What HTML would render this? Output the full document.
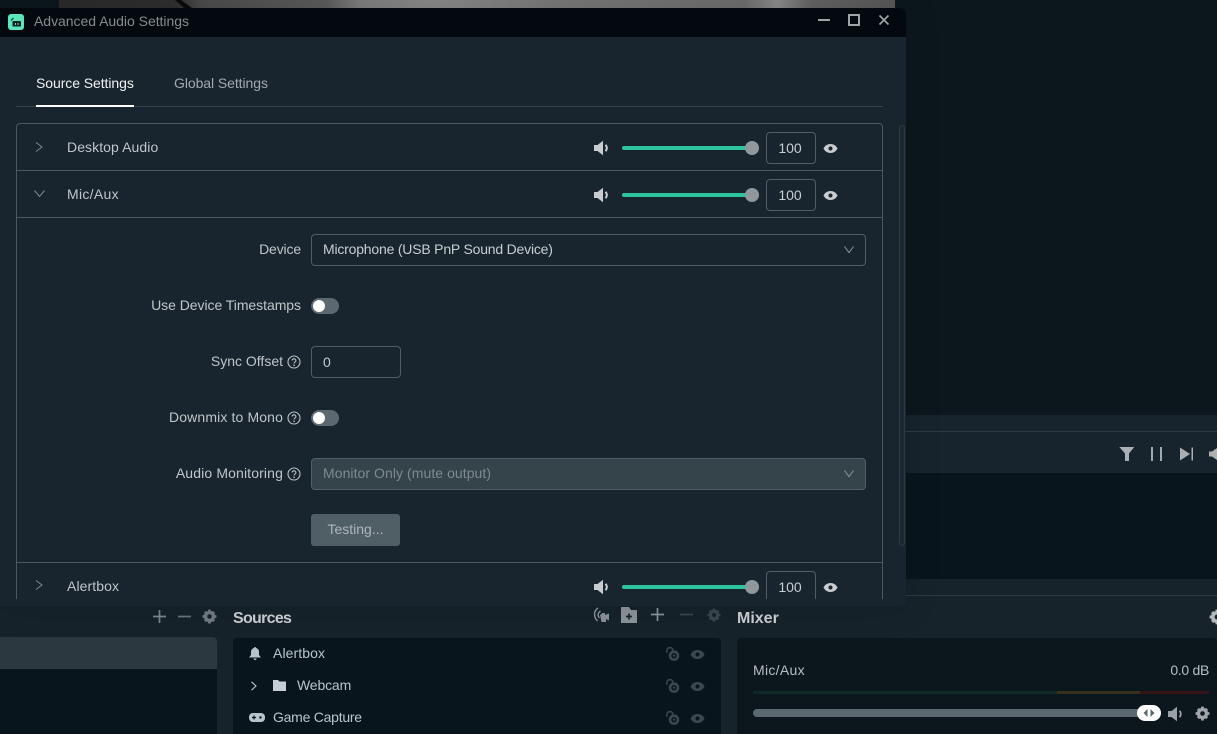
<!DOCTYPE html>
<html><head><meta charset="utf-8"><style>
*{box-sizing:border-box}
html,body{margin:0;padding:0}
body{width:1217px;height:734px;position:relative;overflow:hidden;background:#0c171d;font-family:"Liberation Sans",sans-serif;font-size:14px;color:#c0c5c8}
.a{position:absolute}
.t{position:absolute;white-space:nowrap;line-height:18px}
.r{text-align:right}
svg{position:absolute;overflow:visible}
.inp{position:absolute;border:1px solid #4f5e68;border-radius:4px;line-height:28px;white-space:nowrap;color:#c8cdd0}
.num{line-height:30px;text-align:center;padding-right:2px}
.line{position:absolute;background:#4a5860;height:1px}
.track{position:absolute;left:622px;width:130px;height:4px;background:#2ec4a0;border-radius:2px}
.knob{position:absolute;left:745px;width:14px;height:14px;background:#91989d;border-radius:50%}
.sw{position:absolute;left:311px;width:28px;height:16px;background:#5b6870;border-radius:8px}
.sw i{position:absolute;left:2px;top:2px;width:12px;height:12px;background:#fff;border-radius:50%}
.dk{--h:#09151c;color:#3c4850}
</style></head><body>
<svg width="0" height="0" style="position:absolute"><defs>
<symbol id="spk" viewBox="0 0 16 16"><path d="M1 5h3.500L10 .8v14.400L4.500 11H1z" fill="#c8ccce"/><path d="M12.500 4.800c1.700 2 1.700 4.400 0 6.400" stroke="#c8ccce" stroke-width="2" fill="none"/></symbol>
<symbol id="eye" viewBox="0 0 16 16"><path d="M.5 8C2.300 4.600 5 3.200 8 3.200s5.700 1.400 7.500 4.800C13.700 11.400 11 12.800 8 12.800S2.300 11.400.5 8z" fill="currentColor"/><circle cx="8" cy="8" r="2.100" fill="var(--h,#17242d)"/></symbol>
<symbol id="gear" viewBox="0 0 16 16"><circle cx="8" cy="8" r="4.200" fill="none" stroke="currentColor" stroke-width="3.600"/><path d="M6.500 .6h3v3h-3zM6.500 12.400h3v3h-3zM.6 6.500h3v3h-3zM12.400 6.500h3v3h-3zM2 4.200L4.200 2l2 2L4 6.200zM9.800 4L11.800 2 14 4.200l-2 2zM2 11.800l2-2 2.200 2.200L4.200 14zM9.800 12l2.200-2.200 2 2L11.800 14z" fill="currentColor"/></symbol>
<symbol id="lock" viewBox="0 0 16 16"><circle cx="9" cy="9.700" r="4" fill="none" stroke="currentColor" stroke-width="2.600"/><circle cx="9" cy="9.700" r="1.200" fill="currentColor"/><path d="M2.200 6.500C1 3.500 3 1.500 5 1.500 6.500 1.500 7.500 2.500 8 4.500" fill="none" stroke="currentColor" stroke-width="1.500"/></symbol>
<symbol id="q" viewBox="0 0 14 14"><circle cx="7" cy="7" r="6" fill="none" stroke="#bdc2c5" stroke-width="1.100"/><path d="M5.100 5.500C5.200 4.400 6 3.800 7 3.800s1.900.7 1.900 1.700C8.900 7 7 7 7 8.500" fill="none" stroke="#bdc2c5" stroke-width="1.100"/><circle cx="7" cy="10.200" r=".8" fill="#bdc2c5"/></symbol>
</defs></svg>

<!-- background -->
<div class="a" style="left:59px;top:0;width:836px;height:8px;background:linear-gradient(90deg,#2b2b2b 0,#2f2f2f 14%,#4c4c4c 17%,#5a5a5a 30%,#5c5c5c 32%,#7f7f7f 36%,#8a8a8a 45%,#787878 60%,#6e6e6e 82%,#8c8c8c 86%,#636363 90%,#585858 100%)"></div>
<svg style="left:175px;top:0" width="24" height="8"><path d="M0 0h6l11 8H9z" fill="#0a0a0a"/></svg>
<div class="a" style="left:906px;top:415px;width:311px;height:58px;background:#17242d"></div>
<div class="a" style="left:906px;top:431px;width:311px;height:1px;background:#2c3a42"></div>
<div class="a" style="left:906px;top:473px;width:311px;height:106px;background:#09151c"></div>
<div class="a" style="left:0;top:579px;width:1217px;height:155px;background:#16232b"></div>
<div class="a" style="left:906px;top:595px;width:311px;height:1px;background:#2c3a42"></div>

<!-- right toolbar icons -->
<svg style="left:1118.500px;top:446px" width="16" height="16"><path d="M.3 1h15L10 7.500V15H6V7.500z" fill="#a9afb3"/></svg>
<svg style="left:1150px;top:447px" width="14" height="14"><path d="M1 0h2v14H1zM10 0h2v14h-2z" fill="#a2a8ac"/></svg>
<svg style="left:1180px;top:447px" width="14" height="14"><path d="M0 .5L10 7 0 13.500z M11.500 .5H13v13h-1.500z" fill="#a9afb3"/></svg>
<svg style="left:1209px;top:447px" width="8" height="14"><path d="M0 4.500h3L8 1v12L3 9.500H0z" fill="#b0b2ae"/></svg>
<svg style="left:1209px;top:609px;color:#b4b9bc" width="16" height="16"><use href="#gear"/></svg>

<!-- bottom panels -->
<div class="a" style="left:0;top:637px;width:217px;height:97px;background:#09151c;border-top-right-radius:4px"></div>
<div class="a" style="left:0;top:637px;width:217px;height:32px;background:#2b3840;border-top-right-radius:4px"></div>
<div class="a" style="left:233px;top:638px;width:488px;height:96px;background:#09151c;border-radius:4px 4px 0 0"></div>
<div class="a" style="left:737px;top:638px;width:480px;height:96px;background:#0c171d;border-radius:4px 4px 0 0"></div>

<!-- scene toolbar -->
<svg style="left:153px;top:610px" width="13" height="13"><path d="M6.500 0v13M0 6.500h13" stroke="#7d878d" stroke-width="1.700"/></svg>
<svg style="left:178px;top:610px" width="13" height="13"><path d="M0 6.500h13" stroke="#6c767c" stroke-width="1.700"/></svg>
<svg style="left:202px;top:609px;color:#737c82" width="15" height="15"><use href="#gear"/></svg>
<div class="t" style="left:233px;top:609px;font-size:16px;font-weight:bold;color:#ccd0d3;line-height:20px;letter-spacing:-.7px">Sources</div>

<!-- sources toolbar -->
<svg style="left:593px;top:607px" width="16" height="16" fill="none"><path d="M5 1C.5 4 .5 10 4.500 14M7.500 4C4.500 6 4.500 9 6.500 11" stroke="#8a959b" stroke-width="1.400"/><path d="M7 8l2.500-2H12v2l4-1.500v7L13 12v3H8.500z" fill="#8a9298"/></svg>
<svg style="left:621px;top:607px" width="16" height="16"><path d="M0 0h8l2 3h6v13H0z" fill="#8c9499"/><path d="M8 6.500v6M5 9.500h6" stroke="#17242d" stroke-width="1.700"/></svg>
<svg style="left:651px;top:608px" width="13" height="13"><path d="M6.500 0v13M0 6.500h13" stroke="#8a9499" stroke-width="1.700"/></svg>
<svg style="left:680px;top:608px" width="13" height="13"><path d="M0 6.500h13" stroke="#3b474e" stroke-width="1.700"/></svg>
<svg style="left:707px;top:608px;color:#3b474e" width="14" height="14"><use href="#gear"/></svg>
<div class="t" style="left:737px;top:609px;font-size:16px;font-weight:bold;color:#ccd0d3;line-height:20px">Mixer</div>

<!-- sources rows -->
<svg style="left:249px;top:647px" width="12" height="13"><path d="M6 0c.6 0 1 .4 1 1 2 .5 3 2 3 4v3l2 2.500H0L2 8V5c0-2 1-3.500 3-4 0-.6.400-1 1-1zM4.500 11.500h3C7.500 12.500 7 13 6 13s-1.500-.5-1.500-1.500z" fill="#b8c4cc"/></svg>
<div class="t" style="left:273px;top:644px;color:#b9c4cb;letter-spacing:.1px">Alertbox</div>
<svg style="left:250px;top:681px" width="8" height="10" fill="none"><path d="M1.500 .8L6 5 1.500 9.200" stroke="#b9c4cb" stroke-width="1.100"/></svg>
<svg style="left:273px;top:680px" width="13" height="11"><path d="M0 0h5l1.500 1.500H13V11H0z" fill="#c4ced4"/></svg>
<div class="t" style="left:297px;top:676px;color:#b9c4cb;letter-spacing:-.15px">Webcam</div>
<svg style="left:249px;top:713px" width="16" height="9"><rect width="16" height="9" rx="4" fill="#b8c4cc"/><path d="M3 4.500h4M5 2.500v4" stroke="#09151c" stroke-width="1.200"/><circle cx="11.500" cy="4.500" r="1.200" fill="#09151c"/></svg>
<div class="t" style="left:273px;top:708px;color:#b9c4cb;letter-spacing:-.25px">Game Capture</div>
<svg class="dk" style="left:665px;top:646px" width="16" height="16"><use href="#lock"/></svg>
<svg class="dk" style="left:690px;top:646.500px" width="15" height="15"><use href="#eye"/></svg>
<svg class="dk" style="left:665px;top:678px" width="16" height="16"><use href="#lock"/></svg>
<svg class="dk" style="left:690px;top:678.500px" width="15" height="15"><use href="#eye"/></svg>
<svg class="dk" style="left:665px;top:710px" width="16" height="16"><use href="#lock"/></svg>
<svg class="dk" style="left:690px;top:710.500px" width="15" height="15"><use href="#eye"/></svg>

<!-- mixer -->
<div class="t" style="left:753px;top:661px;color:#b8bdc0;letter-spacing:.3px">Mic/Aux</div>
<div class="t r" style="right:8px;top:661px;color:#b8bdc0;letter-spacing:-.3px">0.0 dB</div>
<div class="a" style="left:753px;top:691px;width:304px;height:3px;background:#0f2a26"></div>
<div class="a" style="left:1057px;top:691px;width:83px;height:3px;background:#37301a"></div>
<div class="a" style="left:1140px;top:691px;width:69px;height:3px;background:#351416"></div>
<div class="a" style="left:753px;top:709px;width:390px;height:8px;background:#5a696f;border-radius:4px"></div>
<div class="a" style="left:1137px;top:705px;width:24px;height:16px;background:#fff;border-radius:8px"></div>
<svg style="left:1143px;top:709px" width="12" height="8"><path d="M4.500 0v8L.5 4zM7.500 0v8l4-4z" fill="#5a696f"/></svg>
<svg style="left:1167px;top:706px" width="16" height="16"><path d="M1 5h3.500L10 .8v14.400L4.500 11H1z" fill="#9aa1a5"/><path d="M12.500 4.800c1.700 2 1.700 4.400 0 6.400" stroke="#9aa1a5" stroke-width="1.800" fill="none"/></svg>
<svg style="left:1195px;top:706px;color:#a0a6aa" width="15" height="15"><use href="#gear"/></svg>

<!-- window -->
<div class="a" style="left:0;top:8px;width:906px;height:598px;background:#18252e;border-radius:0 6px 6px 0;box-shadow:0 0 36px rgba(0,0,0,.14)"></div>
<div class="a" style="left:0;top:8px;width:906px;height:29px;background:#03090e;border-radius:0 6px 0 0"></div>
<div class="a" style="left:8px;top:14px;width:16px;height:16px;background:#5ce6bd;border-radius:3px"></div>
<svg style="left:10px;top:16px" width="12" height="12"><path d="M2.500 5h7.500a1 1 0 0 1 1 1v4.500H2.500z" fill="#0d2520"/><path d="M1 4.500L3.500 2" stroke="#0d2520" stroke-width="1.100"/><path d="M5.500 7v2M8 7v2" stroke="#5ce6bd" stroke-width="1"/></svg>
<div class="t" style="left:34px;top:12px;color:#858b8f;letter-spacing:-.03px">Advanced Audio Settings</div>
<div class="a" style="left:818px;top:19px;width:12px;height:2px;background:#9ea4a8"></div>
<div class="a" style="left:848px;top:14px;width:12px;height:12px;border:2px solid #9ea4a8"></div>
<svg style="left:878px;top:14px" width="12" height="12"><path d="M1.500 1.500l9 9M10.500 1.500l-9 9" stroke="#9ea4a8" stroke-width="1.600"/></svg>

<div class="t" style="left:36px;top:74px;color:#f0f2f3;letter-spacing:-.07px">Source Settings</div>
<div class="t" style="left:174px;top:74px;color:#a3a9ad;letter-spacing:-.07px">Global Settings</div>
<div class="a" style="left:16px;top:106px;width:867px;height:1px;background:#36434b"></div>
<div class="a" style="left:36px;top:105px;width:98px;height:2px;background:#fff"></div>

<!-- scrollbar -->
<div class="a" style="left:899px;top:125px;width:6px;height:421px;border:1px solid #2c3a42;border-radius:3px;background:#1b2831"></div>

<!-- panel -->
<div class="a" style="left:16px;top:123px;width:867px;height:476px;border:1px solid #4a5860;border-bottom:none;border-radius:4px 4px 0 0"></div>
<div class="line" style="left:17px;top:170px;width:865px"></div>
<div class="line" style="left:17px;top:217px;width:865px"></div>
<div class="line" style="left:17px;top:562px;width:865px"></div>

<!-- rows -->
<svg style="left:35px;top:142px" width="9" height="11" fill="none"><path d="M1 .5L7 5 1 9.500" stroke="#7f888d" stroke-width="1"/></svg>
<div class="t" style="left:67px;top:138px;letter-spacing:.08px">Desktop Audio</div>
<svg style="left:34px;top:190px" width="11" height="8" fill="none"><path d="M.5 .5l5 6 5-6" stroke="#7f888d" stroke-width="1"/></svg>
<div class="t" style="left:67px;top:185px;letter-spacing:.3px">Mic/Aux</div>
<svg style="left:35px;top:580px" width="9" height="11" fill="none"><path d="M1 .5L7 5 1 9.500" stroke="#7f888d" stroke-width="1"/></svg>
<div class="t" style="left:67px;top:577px;letter-spacing:.1px">Alertbox</div>

<svg style="left:592.500px;top:140px" width="16" height="16"><use href="#spk"/></svg>
<div class="track" style="top:146px"></div><div class="knob" style="top:141px"></div>
<div class="inp num" style="left:766px;top:132px;width:50px;height:32px">100</div>
<svg style="left:823px;top:140.500px;color:#c8ccce" width="15" height="15"><use href="#eye"/></svg>

<svg style="left:592.500px;top:187px" width="16" height="16"><use href="#spk"/></svg>
<div class="track" style="top:193px"></div><div class="knob" style="top:188px"></div>
<div class="inp num" style="left:766px;top:179px;width:50px;height:32px">100</div>
<svg style="left:823px;top:187.500px;color:#c8ccce" width="15" height="15"><use href="#eye"/></svg>

<svg style="left:592.500px;top:579px" width="16" height="16"><use href="#spk"/></svg>
<div class="track" style="top:585px"></div><div class="knob" style="top:580px"></div>
<div class="a" style="left:766px;top:571px;width:50px;height:28px;border:1px solid #4f5e68;border-bottom:none;border-radius:4px 4px 0 0;text-align:center;padding-right:2px;line-height:30px;color:#c8cdd0">100</div>
<svg style="left:823px;top:579.500px;color:#c8ccce" width="15" height="15"><use href="#eye"/></svg>

<!-- form -->
<div class="t r" style="right:916px;top:240px;letter-spacing:-.15px">Device</div>
<div class="inp" style="left:311px;top:234px;width:555px;height:32px;padding-left:11px;letter-spacing:-.2px">Microphone (USB PnP Sound Device)</div>
<svg style="left:844px;top:246px" width="10" height="7" fill="none"><path d="M.5 .5L5 6.500 9.500 .5" stroke="#8e969b" stroke-width="1"/></svg>

<div class="t r" style="right:916px;top:296px;letter-spacing:-.05px">Use Device Timestamps</div>
<div class="sw" style="top:298px"><i></i></div>

<div class="t r" style="right:934px;top:352px">Sync Offset</div>
<svg style="left:287px;top:355px" width="14" height="14"><use href="#q"/></svg>
<div class="inp" style="left:311px;top:346px;width:90px;height:32px;padding-left:11px;line-height:30px">0</div>

<div class="t r" style="right:934px;top:408px;letter-spacing:.13px">Downmix to Mono</div>
<svg style="left:287px;top:411px" width="14" height="14"><use href="#q"/></svg>
<div class="sw" style="top:410px"><i></i></div>

<div class="t r" style="right:934px;top:464px;letter-spacing:.13px">Audio Monitoring</div>
<svg style="left:287px;top:467px" width="14" height="14"><use href="#q"/></svg>
<div class="inp" style="left:311px;top:458px;width:555px;height:32px;padding-left:11px;background:#35434b;color:#7f8a90;border-color:#515f67;letter-spacing:.06px">Monitor Only (mute output)</div>
<svg style="left:844px;top:470px" width="10" height="7" fill="none"><path d="M.5 .5L5 6.500 9.500 .5" stroke="#8e969b" stroke-width="1"/></svg>

<div class="a" style="left:311px;top:514px;width:89px;height:32px;background:#505e66;border-radius:3px;text-align:center;line-height:30px;color:#b0b6ba">Testing...</div>
</body></html>
